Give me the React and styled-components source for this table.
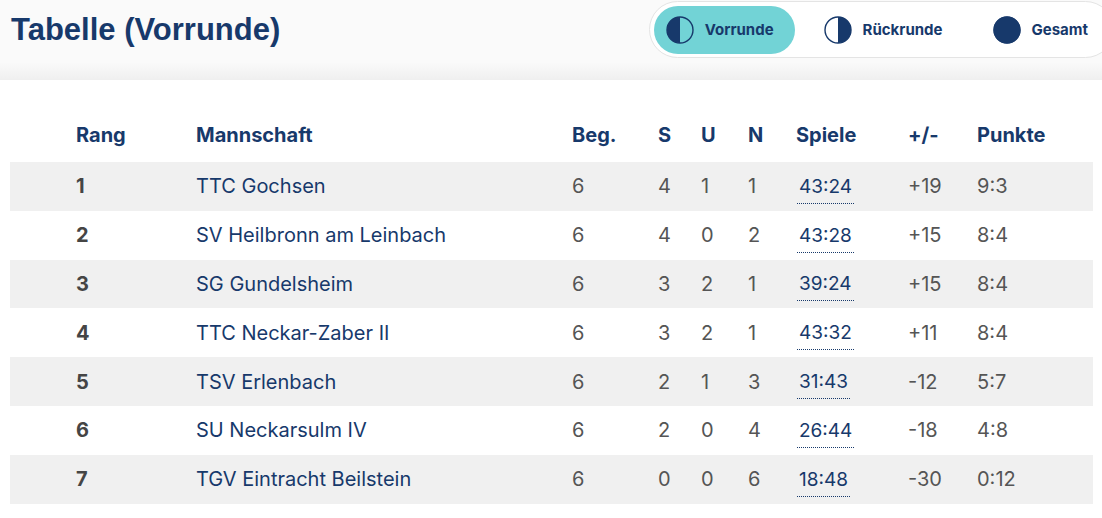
import React from 'react';
import styled, { createGlobalStyle } from 'styled-components';

const navy = '#17396b';

const GlobalStyle = createGlobalStyle`
   html, body {
      margin: 0;
      padding: 0;
      background: #ffffff;
   }
   body {
      font-family: Inter, "Noto Sans", sans-serif;
      color: ${navy};
   }
`;

const Page = styled.div`
   width: 1102px;
   overflow: hidden;
`;

const Header = styled.header`
   display: flex;
   align-items: flex-start;
   height: 80px;
   padding: 1px 0 0 11px;
   box-sizing: border-box;
   background: linear-gradient(to bottom, #fafafa 0%, #fafafa 78%, #efefef 100%);
`;

const Title = styled.h1`
   margin: 0;
   font-family: "Liberation Sans", Arial, sans-serif;
   font-weight: 700;
   font-size: 31px;
   line-height: 58px;
   color: ${navy};
`;

const Toggle = styled.div`
   display: flex;
   align-items: center;
   gap: 17px;
   margin-left: auto;
   margin-right: -12px;
   height: 57px;
   padding: 0 4px;
   box-sizing: border-box;
   border: 1px solid #e4e4e4;
   border-radius: 29px;
   background: #ffffff;
   flex-shrink: 0;
`;

const ToggleButton = styled.button`
   display: flex;
   align-items: center;
   gap: 11px;
   height: 48px;
   padding: 0 21px 0 12px;
   border: none;
   border-radius: 24px;
   background: ${p => (p.$active ? '#72d3d6' : 'transparent')};
   font-family: Inter, "Noto Sans", sans-serif;
   font-weight: 700;
   font-size: 15px;
   color: ${navy};
   cursor: pointer;
`;

const Table = styled.div`
   margin: 33px 9px 0 10px;
`;

const Row = styled.div`
   display: grid;
   grid-template-columns: 120px 376px 86px 43px 47px 48px 112px 69px 1fr;
   align-items: center;
   height: ${p => (p.$head ? '49px' : '48.8px')};
   padding-left: 66px;
   padding-bottom: ${p => (p.$head ? '6px' : '0')};
   box-sizing: border-box;
   background: ${p => (p.$striped ? '#f0f0f0' : '#ffffff')};
`;

const HeadCell = styled.div`
   font-weight: 700;
   font-size: 20px;
   color: ${navy};
`;

const Cell = styled.div`
   font-size: 20px;
   color: ${p => (p.$team ? navy : '#555555')};
   font-weight: ${p => (p.$bold ? 700 : 400)};
   ${p => p.$bold && 'color: #454545;'}
`;

const Games = styled.span`
   display: inline-block;
   margin-left: 1px;
   padding: 7px 2px 5px;
   border-bottom: 1.5px dotted ${navy};
   font-size: 19px;
   line-height: 22px;
   color: ${navy};
`;

const HalfIcon = ({ half }) => (
   <svg width="28" height="28" viewBox="0 0 28 28">
      <circle cx="14" cy="14" r="13" fill="none" stroke={navy} strokeWidth="1.4" />
      {half === 'left' && <path d="M14 1 A13 13 0 0 0 14 27 Z" fill={navy} />}
      {half === 'right' && <path d="M14 1 A13 13 0 0 1 14 27 Z" fill={navy} />}
      {half === 'full' && <circle cx="14" cy="14" r="13.5" fill={navy} />}
   </svg>
);

const teams = [
   { rank: 1, name: 'TTC Gochsen', beg: 6, s: 4, u: 1, n: 1, games: '43:24', diff: '+19', pts: '9:3' },
   { rank: 2, name: 'SV Heilbronn am Leinbach', beg: 6, s: 4, u: 0, n: 2, games: '43:28', diff: '+15', pts: '8:4' },
   { rank: 3, name: 'SG Gundelsheim', beg: 6, s: 3, u: 2, n: 1, games: '39:24', diff: '+15', pts: '8:4' },
   { rank: 4, name: 'TTC Neckar-Zaber II', beg: 6, s: 3, u: 2, n: 1, games: '43:32', diff: '+11', pts: '8:4' },
   { rank: 5, name: 'TSV Erlenbach', beg: 6, s: 2, u: 1, n: 3, games: '31:43', diff: '-12', pts: '5:7' },
   { rank: 6, name: 'SU Neckarsulm IV', beg: 6, s: 2, u: 0, n: 4, games: '26:44', diff: '-18', pts: '4:8' },
   { rank: 7, name: 'TGV Eintracht Beilstein', beg: 6, s: 0, u: 0, n: 6, games: '18:48', diff: '-30', pts: '0:12' },
];

const columns = ['Rang', 'Mannschaft', 'Beg.', 'S', 'U', 'N', 'Spiele', '+/-', 'Punkte'];

const App = () => (
   <Page>
      <GlobalStyle />
      <Header>
         <Title>Tabelle (Vorrunde)</Title>
         <Toggle>
            <ToggleButton $active>
               <HalfIcon half="left" />
               Vorrunde
            </ToggleButton>
            <ToggleButton>
               <HalfIcon half="right" />
               Rückrunde
            </ToggleButton>
            <ToggleButton>
               <HalfIcon half="full" />
               Gesamt
            </ToggleButton>
         </Toggle>
      </Header>
      <Table>
         <Row $head>
            {columns.map(c => <HeadCell key={c}>{c}</HeadCell>)}
         </Row>
         {teams.map((t, i) => (
            <Row key={t.rank} $striped={i % 2 === 0}>
               <Cell $bold>{t.rank}</Cell>
               <Cell $team>{t.name}</Cell>
               <Cell>{t.beg}</Cell>
               <Cell>{t.s}</Cell>
               <Cell>{t.u}</Cell>
               <Cell>{t.n}</Cell>
               <Cell><Games>{t.games}</Games></Cell>
               <Cell>{t.diff}</Cell>
               <Cell>{t.pts}</Cell>
            </Row>
         ))}
      </Table>
   </Page>
);

export default App;
